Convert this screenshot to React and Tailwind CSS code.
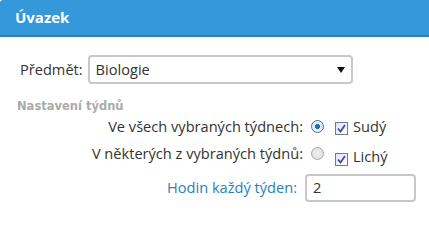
import React from "react";

const Radio = ({ checked }) => (
  <span
    className={
      "inline-block w-[13px] h-[13px] rounded-full border shrink-0 " +
      (checked
        ? "border-[#4b6f8f] bg-[radial-gradient(circle,#1e6fb5_0,#1e6fb5_28%,#dfe9f3_36%,#f4f7fa_100%)]"
        : "border-[#a9a9a9] bg-[radial-gradient(circle,#f0f0f0_0,#dcdcdc_100%)]")
    }
  />
);

const Check = () => (
  <span className="inline-flex w-[13px] h-[13px] items-center justify-center border border-[#707b8c] bg-[linear-gradient(135deg,#dfe4ee,#ffffff)] shrink-0">
    <svg width="9" height="9" viewBox="0 0 9 9">
      <path d="M1 4.5 L3.5 7.5 L8 1" fill="none" stroke="#3c4fa3" strokeWidth="1.8" />
    </svg>
  </span>
);

export default function App() {
  return (
    <div
      className="w-[429px] h-[206px] bg-white overflow-hidden"
      style={{ fontFamily: '"Open Sans", sans-serif' }}
    >
      <div className="h-[37px] bg-[#3498db] border-b-2 border-[#2a80bd] rounded-tl-[3px] flex items-center pl-[15px]">
        <span className="text-white font-bold text-[15px]">Úvazek</span>
      </div>

      <div className="flex items-center mt-[18px] pl-[20px]">
        <span className="text-[14.6px] text-[#333]">Předmět:</span>
        <div className="ml-[5px] w-[265px] h-[29px] border-2 border-[#c8c8c8] rounded-[4px] flex items-center justify-between pl-[6px] pr-[6px]">
          <span className="text-[14.6px] text-[#333]">Biologie</span>
          <svg width="8" height="6" viewBox="0 0 8 6">
            <path d="M0 0 L8 0 L4 6 Z" fill="#111" />
          </svg>
        </div>
      </div>

      <div
        className="pl-[17px] mt-[15px] text-[11.5px] font-bold text-[#aaa] leading-[14px]"
        style={{ fontFamily: 'Tahoma, "DejaVu Sans", Verdana, sans-serif' }}
      >
        Nastavení týdnů
      </div>

      <div className="flex items-center h-[22px] mt-[3px]">
        <span className="w-[303px] text-right text-[14.6px] text-[#333]">
          Ve všech vybraných týdnech:
        </span>
        <span className="ml-[8px]">
          <Radio checked />
        </span>
        <span className="ml-[11px]">
          <Check />
        </span>
        <span className="ml-[5px] text-[14.6px] text-[#333]">Sudý</span>
      </div>

      <div className="flex items-center h-[22px] mt-[5px]">
        <span className="w-[303px] text-right text-[14.6px] text-[#333]">
          V některých z vybraných týdnů:
        </span>
        <span className="ml-[8px]">
          <Radio />
        </span>
        <span className="ml-[11px] mt-[8px]">
          <Check />
        </span>
        <span className="ml-[5px] mt-[6px] text-[14.6px] text-[#333]">Lichý</span>
      </div>

      <div className="flex items-center mt-[9px]">
        <span className="w-[297px] text-right text-[14.6px] text-[#2a7fc0]">
          Hodin každý týden:
        </span>
        <div className="ml-[8px] w-[111px] h-[28px] border-2 border-[#c8c8c8] rounded-[4px] flex items-center pl-[6px]">
          <span className="text-[14.6px] text-[#333]">2</span>
        </div>
      </div>
    </div>
  );
}
